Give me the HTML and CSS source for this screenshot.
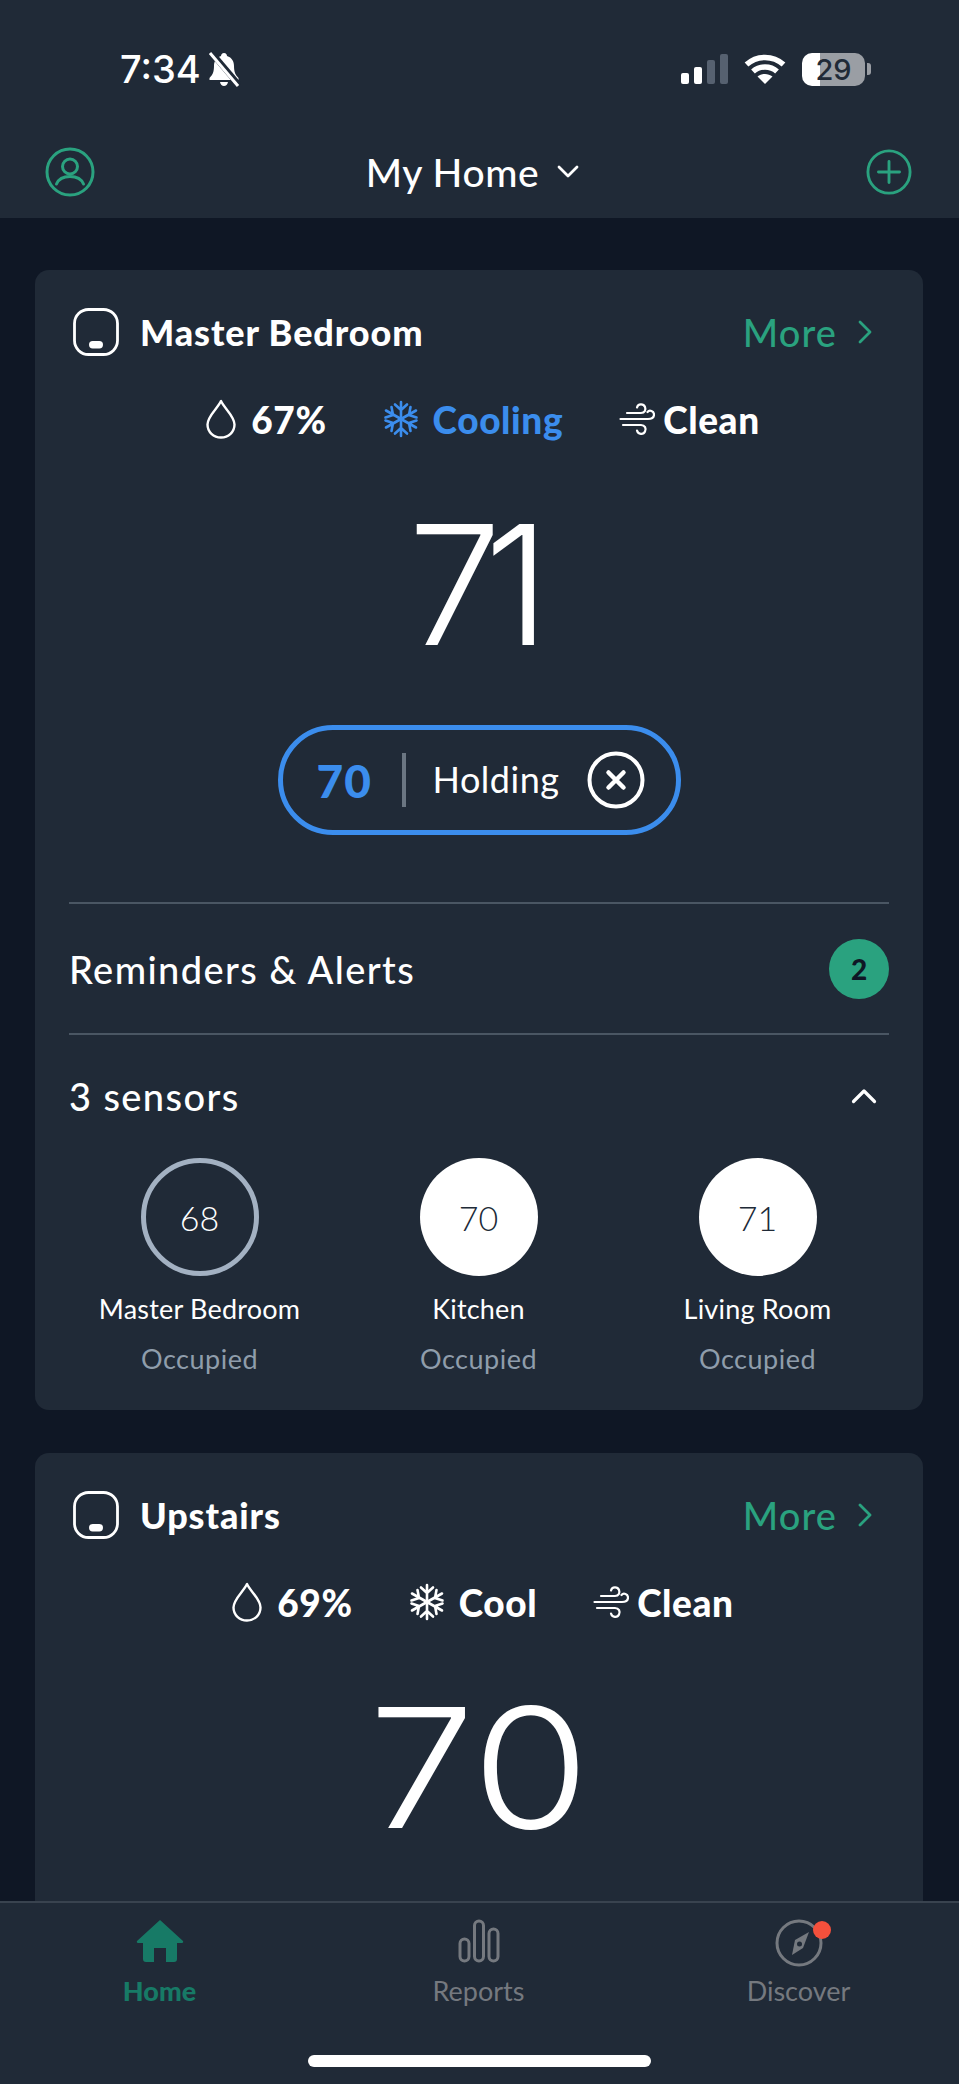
FILE: index.html
```html
<!DOCTYPE html>
<html lang="en">
<head>
    <meta charset="UTF-8">
    <meta name="viewport" content="width=device-width, initial-scale=1.0">
    <title>My Home</title>
    <link rel="stylesheet" href="styles.css">
</head>
<body>
    <svg class="defs" width="0" height="0">
        <symbol id="device" viewBox="0 0 46 48">
            <rect x="1.500" y="1.500" width="43" height="45" rx="14" fill="none" stroke="currentColor" stroke-width="2.800"/>
            <rect x="16" y="33" width="14" height="7.500" rx="3.700" fill="currentColor"/>
        </symbol>
        <symbol id="drop" viewBox="0 0 32 40">
            <path d="M16 2 C13 9 2.500 17 2.500 25.500 C2.500 33 8.500 38.500 16 38.500 C23.500 38.500 29.500 33 29.500 25.500 C29.500 17 19 9 16 2 Z" fill="none" stroke="currentColor" stroke-width="2.400" stroke-linejoin="round"/>
        </symbol>
        <symbol id="snow" viewBox="0 0 36 38">
            <g fill="none" stroke="currentColor" stroke-width="2.600" stroke-linecap="round" stroke-linejoin="round">
                <path d="M18 2 V36 M12 4.500 L18 10 L24 4.500 M12 33.500 L18 28 L24 33.500"/>
                <path d="M3 10.500 L33 27.500 M2.500 17.500 L10 15 L8.500 7 M33.500 20.500 L26 23 L27.500 31"/>
                <path d="M3 27.500 L33 10.500 M2.500 20.500 L10 23 L8.500 31 M33.500 17.500 L26 15 L27.500 7"/>
            </g>
        </symbol>
        <symbol id="wind" viewBox="0 0 36 38">
            <g fill="none" stroke="currentColor" stroke-width="2.200" stroke-linecap="round">
                <path d="M8 13 H22 C26 13 27 9.500 26 7 C24.500 3.500 19 3.500 18 7.500"/>
                <path d="M1.500 19 H29 C33 19 35 17 35 14.500 C35 11 30.500 9.500 28.500 12"/>
                <path d="M4 25 H22 C26 25 27.500 28.500 26 31.500 C24.500 35 19 34.500 18 30.500"/>
            </g>
        </symbol>
        <symbol id="chev" viewBox="0 0 14 24">
            <path d="M2 2 L12 12 L2 22" fill="none" stroke="currentColor" stroke-width="2.800" stroke-linecap="round" stroke-linejoin="round"/>
        </symbol>
    </svg>

    <div class="app">
        <header class="top">
            <div class="statusbar">
                <div class="status-left">
                    <span class="clock">7:34</span>
                    <svg class="bell" viewBox="0 0 34 36" width="34" height="36">
                        <path d="M17 2 C15 2 14 3.500 14 5 C9 6.500 7 10.500 7 15 C7 21 5.500 24 2.500 27 V29 H31.500 V27 C28.500 24 27 21 27 15 C27 10.500 25 6.500 20 5 C20 3.500 19 2 17 2 Z M13 31 C13.500 33.500 15 35 17 35 C19 35 20.500 33.500 21 31 Z" fill="#fff"/>
                        <path d="M4 1 L32 34" stroke="#202a37" stroke-width="6"/>
                        <path d="M3 2 L31 35" stroke="#fff" stroke-width="3"/>
                    </svg>
                </div>
                <div class="status-right">
                    <div class="signal">
                        <span class="bar bar1"></span>
                        <span class="bar bar2"></span>
                        <span class="bar bar3"></span>
                        <span class="bar bar4"></span>
                    </div>
                    <svg class="wifi" viewBox="0 0 42 32" width="42" height="32">
                        <g fill="none" stroke="#fff" stroke-width="5.500">
                            <path d="M2.500 11.500 C13 2 29 2 39.500 11.500"/>
                            <path d="M9 18.500 C15.500 12.500 26.500 12.500 33 18.500"/>
                        </g>
                        <path d="M21 31 L13.500 23.500 C18 20 24 20 28.500 23.500 Z" fill="#fff"/>
                    </svg>
                    <div class="battery">
                        <div class="battery-body"><span class="battery-num">29</span></div>
                        <span class="battery-cap"></span>
                    </div>
                </div>
            </div>
            <nav class="navbar">
                <svg class="nav-icon" viewBox="0 0 50 50" width="50" height="50">
                    <g fill="none" stroke="#2aa27f" stroke-width="3">
                        <circle cx="25" cy="25" r="23"/>
                        <circle cx="25" cy="19.500" r="7.500"/>
                        <path d="M11.500 37 C14 31 19 29.500 25 29.500 C31 29.500 36 31 38.500 37" stroke-linecap="round"/>
                    </g>
                </svg>
                <div class="home-select">
                    <span>My Home</span>
                    <svg viewBox="0 0 22 14" width="22" height="14">
                        <path d="M2 2 L11 11 L20 2" fill="none" stroke="#fff" stroke-width="2.800" stroke-linecap="round" stroke-linejoin="round"/>
                    </svg>
                </div>
                <svg class="nav-icon" viewBox="0 0 48 48" width="46" height="46">
                    <g fill="none" stroke="#2aa27f" stroke-width="3">
                        <circle cx="24" cy="24" r="22"/>
                        <path d="M24 13 V35 M13 24 H35" stroke-linecap="round"/>
                    </g>
                </svg>
            </nav>
        </header>

        <main class="content">
            <section class="card">
                <div class="card-head">
                    <div class="card-title">
                        <svg class="device"><use href="#device"/></svg>
                        <h2>Master Bedroom</h2>
                    </div>
                    <a class="more">More <svg class="more-chev"><use href="#chev"/></svg></a>
                </div>
                <div class="stats">
                    <span class="stat"><svg class="ico-drop"><use href="#drop"/></svg>67%</span>
                    <span class="stat stat-blue"><svg class="ico-snow"><use href="#snow"/></svg>Cooling</span>
                    <span class="stat"><svg class="ico-wind"><use href="#wind"/></svg>Clean</span>
                </div>
                <div class="temp temp-tight">71</div>
                <div class="pill-wrap">
                    <div class="pill">
                        <span class="pill-temp">70</span>
                        <span class="pill-sep"></span>
                        <span class="pill-label">Holding</span>
                        <svg class="pill-x" viewBox="0 0 58 58" width="58" height="58">
                            <circle cx="29" cy="29" r="26.500" fill="none" stroke="#fff" stroke-width="4"/>
                            <path d="M21.500 21.500 L36.500 36.500 M36.500 21.500 L21.500 36.500" stroke="#fff" stroke-width="4.500" stroke-linecap="round"/>
                        </svg>
                    </div>
                </div>
                <div class="row row-alerts">
                    <span class="row-label">Reminders &amp; Alerts</span>
                    <span class="badge">2</span>
                </div>
                <div class="row row-sensors">
                    <span class="row-label">3 sensors</span>
                    <svg viewBox="0 0 26 16" width="26" height="16">
                        <path d="M2.500 13.500 L13 3 L23.500 13.500" fill="none" stroke="#fff" stroke-width="3.200" stroke-linecap="round" stroke-linejoin="round"/>
                    </svg>
                </div>
                <div class="sensors">
                    <div class="sensor">
                        <div class="dial dial-ring">68</div>
                        <div class="sensor-name">Master Bedroom</div>
                        <div class="sensor-state">Occupied</div>
                    </div>
                    <div class="sensor">
                        <div class="dial">70</div>
                        <div class="sensor-name">Kitchen</div>
                        <div class="sensor-state">Occupied</div>
                    </div>
                    <div class="sensor">
                        <div class="dial">71</div>
                        <div class="sensor-name">Living Room</div>
                        <div class="sensor-state">Occupied</div>
                    </div>
                </div>
            </section>

            <section class="card">
                <div class="card-head">
                    <div class="card-title">
                        <svg class="device"><use href="#device"/></svg>
                        <h2>Upstairs</h2>
                    </div>
                    <a class="more">More <svg class="more-chev"><use href="#chev"/></svg></a>
                </div>
                <div class="stats">
                    <span class="stat"><svg class="ico-drop"><use href="#drop"/></svg>69%</span>
                    <span class="stat"><svg class="ico-snow"><use href="#snow"/></svg>Cool</span>
                    <span class="stat"><svg class="ico-wind"><use href="#wind"/></svg>Clean</span>
                </div>
                <div class="temp temp-wide">70</div>
            </section>
        </main>

        <footer class="tabbar">
            <div class="tabs">
                <div class="tab tab-active">
                    <svg viewBox="0 0 48 44" width="48" height="44">
                        <path d="M24 1 L47 22 C47.500 23 47 24 46 24 H41 V40 C41 42 40 43 38 43 H30 V29 H18 V43 H10 C8 43 7 42 7 40 V24 H2 C1 24 .5 23 1 22 Z" fill="#177a66"/>
                    </svg>
                    <span>Home</span>
                </div>
                <div class="tab">
                    <svg viewBox="0 0 42 44" width="42" height="44">
                        <g fill="none" stroke="#75797f" stroke-width="3">
                            <rect x="2" y="20" width="9" height="22" rx="4.500"/>
                            <rect x="16.500" y="2" width="9" height="40" rx="4.500"/>
                            <rect x="31" y="10" width="9" height="32" rx="4.500"/>
                        </g>
                    </svg>
                    <span>Reports</span>
                </div>
                <div class="tab">
                    <div class="compass">
                        <svg viewBox="0 0 48 48" width="48" height="48">
                            <circle cx="24" cy="24" r="22" fill="none" stroke="#75797f" stroke-width="3"/>
                            <path d="M34 13 L28 29 L17 36 L20 21 Z" fill="#75797f"/>
                            <circle cx="24.500" cy="25" r="2.500" fill="#202a37"/>
                        </svg>
                        <span class="dot"></span>
                    </div>
                    <span>Discover</span>
                </div>
            </div>
            <div class="home-bar"></div>
        </footer>
    </div>
</body>
</html>
```

FILE: styles.css
```css
* {
    box-sizing: border-box;
}

body {
    margin: 0;
    background-color: #0f1725;
    color: #fff;
    font-family: Lato, "Open Sans", sans-serif;
}

.defs {
    position: absolute;
}

.app {
    display: flex;
    flex-direction: column;
    height: 2084px;
    overflow: hidden;
}

/* top */
.top {
    height: 218px;
    flex-shrink: 0;
    background-color: #202a37;
}

.statusbar {
    display: flex;
    justify-content: space-between;
    align-items: center;
    height: 120px;
    padding: 18px 88px 0 120px;
}

.status-left,
.status-right {
    display: flex;
    align-items: center;
}

.clock {
    font-family: Inter, sans-serif;
    font-size: 38px;
    font-weight: 500;
}

.bell {
    margin-left: 6px;
}

.status-right {
    gap: 16px;
}

.signal {
    display: flex;
    align-items: flex-end;
    gap: 5px;
    height: 30px;
}

.bar {
    width: 8px;
    border-radius: 2px;
    background-color: #fff;
}

.bar1 {
    height: 11px;
}

.bar2 {
    height: 17px;
}

.bar3 {
    height: 24px;
    background-color: #566170;
}

.bar4 {
    height: 30px;
    background-color: #566170;
}

.battery {
    display: flex;
    align-items: center;
    gap: 2px;
}

.battery-body {
    display: flex;
    justify-content: center;
    align-items: center;
    width: 63px;
    height: 33px;
    border-radius: 10px;
    background: linear-gradient(to right, #fff 0, #fff 28%, #9a9ea4 28%);
}

.battery-num {
    font-family: Inter, sans-serif;
    font-size: 29px;
    font-weight: 500;
    color: #202a37;
}

.battery-cap {
    width: 4px;
    height: 12px;
    border-radius: 0 3px 3px 0;
    background-color: #9a9ea4;
}

.navbar {
    display: flex;
    justify-content: space-between;
    align-items: center;
    height: 98px;
    padding: 6px 47px 0 45px;
}

.home-select {
    display: flex;
    align-items: center;
    gap: 18px;
    margin-right: 16px;
    font-size: 39px;
    font-weight: 500;
    letter-spacing: 0.6px;
}

/* cards */
.content {
    flex: 1;
    display: flex;
    flex-direction: column;
    gap: 43px;
    min-height: 0;
    padding: 52px 36px 0 35px;
    overflow: hidden;
}

.card {
    flex-shrink: 0;
    padding: 38px 34px 0;
    border-radius: 14px;
    background-color: #202a37;
}

.card + .card {
    height: 600px;
}

.card-head {
    display: flex;
    justify-content: space-between;
    align-items: center;
    height: 47px;
}

.card-title {
    display: flex;
    align-items: center;
    gap: 21px;
    padding-left: 4px;
}

.card-title h2 {
    margin: 0;
    font-size: 36px;
    font-weight: 900;
    letter-spacing: 0.9px;
}

.device {
    width: 46px;
    height: 48px;
}

.more {
    display: flex;
    align-items: center;
    gap: 21px;
    padding-right: 17px;
    font-size: 38px;
    font-weight: 500;
    letter-spacing: 1.1px;
    color: #2aa27f;
}

.more-chev {
    width: 14px;
    height: 24px;
}

.stats {
    display: flex;
    justify-content: center;
    gap: 56px;
    height: 40px;
    margin-top: 44px;
    padding-left: 7px;
}

.stat {
    display: flex;
    align-items: center;
    gap: 14px;
    font-size: 37px;
    font-weight: 900;
    letter-spacing: 0.6px;
}

.stat-blue {
    color: #3b8ded;
}

.ico-drop {
    width: 32px;
    height: 40px;
}

.ico-snow,
.ico-wind {
    width: 36px;
    height: 38px;
}

.ico-wind {
    margin-right: -6px;
}

.temp {
    height: 126px;
    margin-top: 82px;
    font-family: Inter, sans-serif;
    font-size: 167px;
    font-weight: 300;
    line-height: 126px;
    text-align: center;
}

.temp-tight {
    letter-spacing: -17px;
    text-indent: -17px;
}

.temp-wide {
    transform: scaleX(1.14);
}

.pill-wrap {
    display: flex;
    justify-content: center;
    margin-top: 78px;
}

.pill {
    display: flex;
    align-items: center;
    width: 403px;
    height: 110px;
    padding-left: 34px;
    border: 5px solid #3b8ded;
    border-radius: 55px;
}

.pill-temp {
    width: 56px;
    font-size: 46px;
    font-weight: 900;
    letter-spacing: 1px;
    color: #3b8ded;
}

.pill-sep {
    width: 4px;
    height: 54px;
    margin: 0 27px 0 29px;
    background-color: #6b7682;
}

.pill-label {
    width: 154px;
    padding-bottom: 3px;
    font-size: 36px;
    font-weight: 400;
    letter-spacing: 0.5px;
}

.row {
    display: flex;
    justify-content: space-between;
    align-items: center;
}

.row-alerts {
    height: 133px;
    margin-top: 67px;
    border-top: 2px solid #4a5663;
    border-bottom: 2px solid #4a5663;
}

.row-sensors {
    height: 90px;
    padding-top: 32px;
    padding-right: 12px;
}

.row-label {
    font-size: 38px;
    font-weight: 500;
    letter-spacing: 1.4px;
}

.badge {
    display: flex;
    justify-content: center;
    align-items: center;
    width: 60px;
    height: 60px;
    border-radius: 50%;
    background-color: #2aa27f;
    color: #0f1725;
    font-size: 28px;
    font-weight: 900;
}

.sensors {
    display: grid;
    grid-template-columns: repeat(3, 279px);
    margin-top: 33px;
    padding-bottom: 34px;
    margin-left: -9px;
}

.sensor {
    display: flex;
    flex-direction: column;
    align-items: center;
}

.dial {
    display: flex;
    justify-content: center;
    align-items: center;
    width: 118px;
    height: 118px;
    border-radius: 50%;
    background-color: #fff;
    color: #202a37;
    font-size: 34px;
    font-weight: 300;
}

.dial-ring {
    border: 5px solid #a3b1c2;
    background: none;
    color: #fff;
}

.sensor-name {
    margin-top: 16px;
    font-size: 27px;
    line-height: 34px;
    letter-spacing: 0.2px;
}

.sensor-state {
    margin-top: 16px;
    font-size: 27px;
    line-height: 34px;
    letter-spacing: 0.5px;
    color: #8f9dab;
}

/* tabs */
.tabbar {
    position: relative;
    height: 183px;
    flex-shrink: 0;
    border-top: 2px solid #39434f;
    background-color: #202a37;
}

.tabs {
    display: grid;
    grid-template-columns: 319px 319px 321px;
    padding-top: 16px;
}

.tab {
    display: flex;
    flex-direction: column;
    align-items: center;
    font-size: 27px;
    color: #75797f;
}

.tab svg {
    display: block;
}

.tab span:last-child {
    margin-top: 11px;
}

.tab-active {
    font-weight: 900;
    color: #177a66;
}

.compass {
    position: relative;
    width: 48px;
    height: 44px;
}

.dot {
    position: absolute;
    top: -9px;
    right: -8px;
    width: 18px;
    height: 18px;
    border-radius: 50%;
    background-color: #f4503c;
}

.home-bar {
    position: absolute;
    left: 308px;
    bottom: 17px;
    width: 343px;
    height: 12px;
    border-radius: 6px;
    background-color: #fff;
}
```
